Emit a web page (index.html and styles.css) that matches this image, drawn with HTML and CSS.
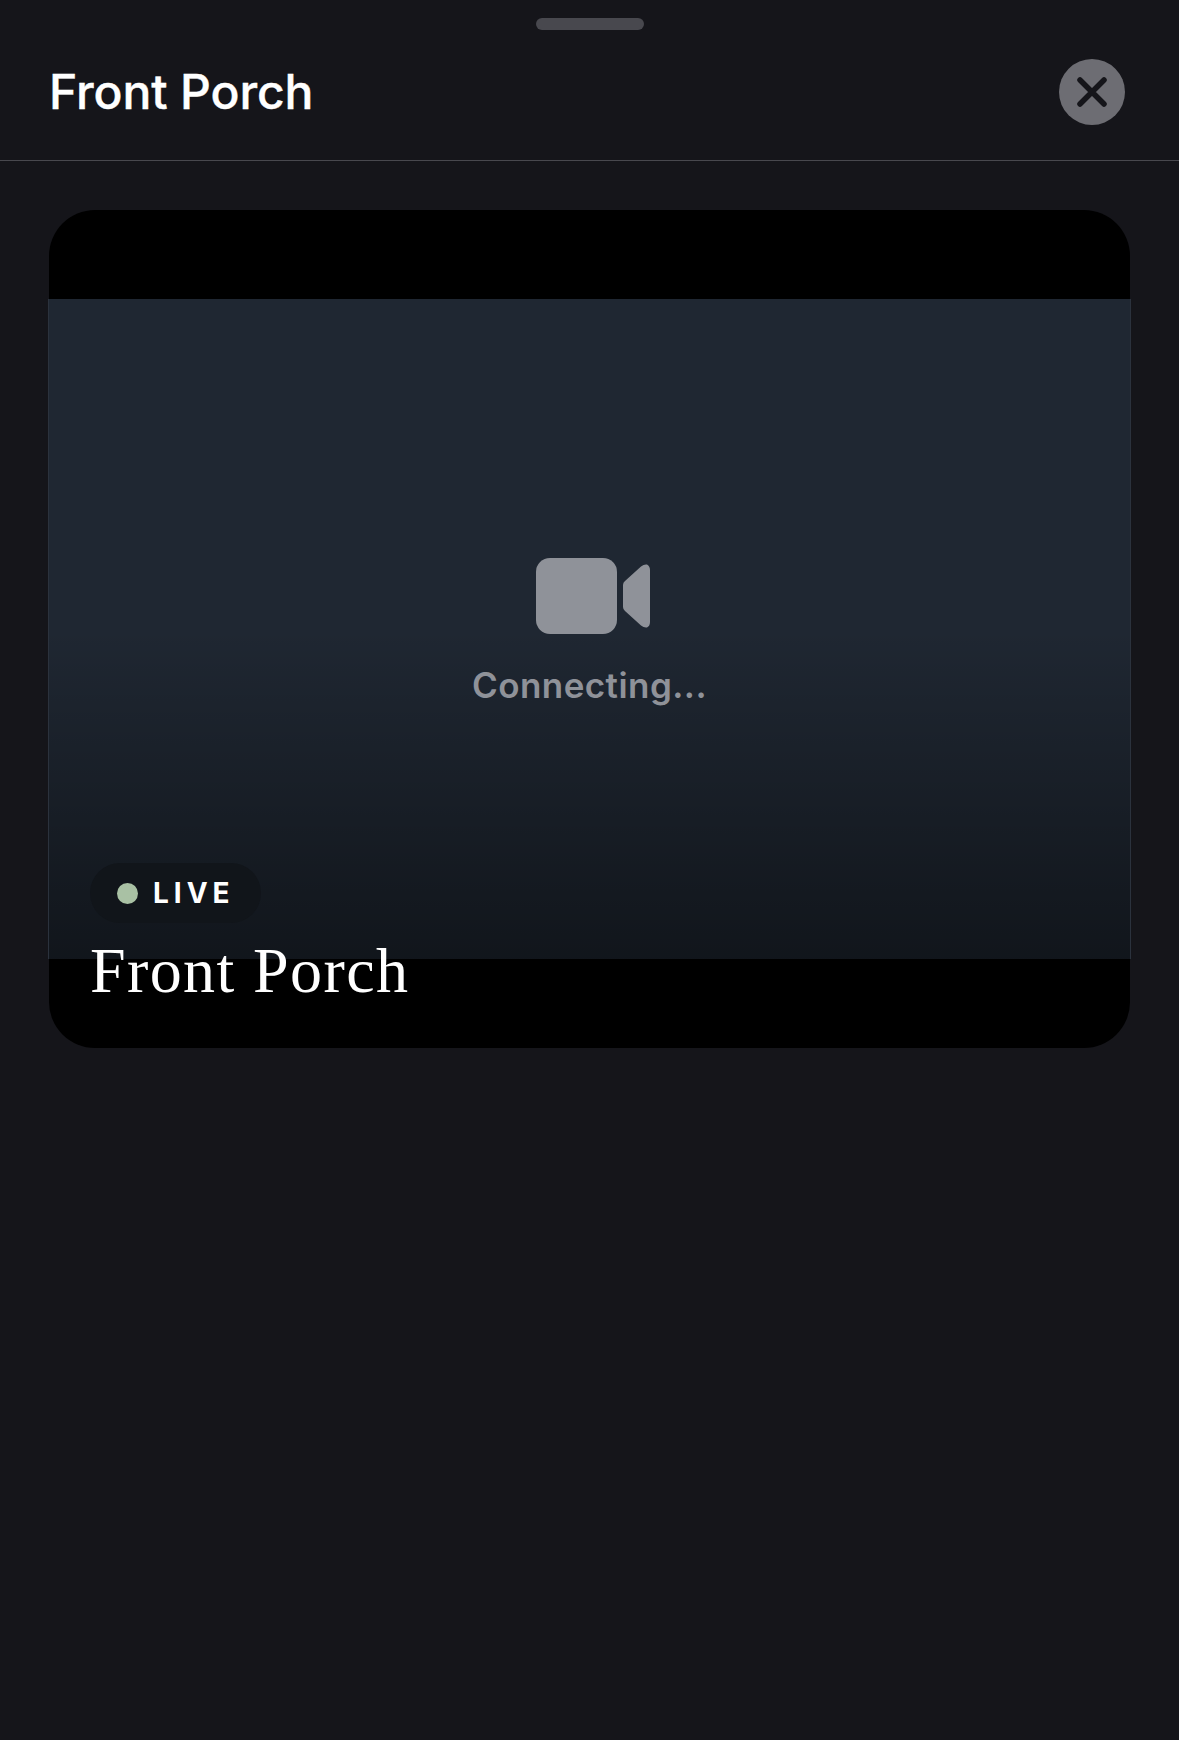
FILE: index.html
```
<!DOCTYPE html>
<html lang="en">
<head>
<meta charset="utf-8">
<title>Front Porch</title>
<link rel="stylesheet" href="styles.css">
</head>
<body>
<main class="sheet">
  <div class="grabber-row"><div class="grabber"></div></div>
  <header class="header">
    <h1 class="header-title">Front Porch</h1>
    <button class="close" aria-label="Close">
      <svg class="close-icon" viewBox="0 0 30 30"><path d="M3 3 L27 27 M27 3 L3 27"/></svg>
    </button>
  </header>
  <section class="content">
    <div class="card">
      <div class="video">
        <div class="scrim"></div>
        <div class="status">
          <svg class="camera" viewBox="0 0 114 76">
            <rect x="0" y="0" width="81" height="76" rx="14"/>
            <path d="M87 27 Q87 24.5 89 23 L105 8.5 Q108 6 111 6.500 Q114 8 114 12 L114 64 Q114 68 111 69.500 Q108 70 105 67.500 L89 53 Q87 51.500 87 49 Z"/>
          </svg>
          <div class="status-text">Connecting...</div>
        </div>
      </div>
      <div class="overlay">
        <div class="live"><span class="live-dot"></span><span class="live-text">LIVE</span></div>
        <div class="camera-name">Front Porch</div>
      </div>
    </div>
  </section>
</main>
</body>
</html>
```

FILE: styles.css
```
* { box-sizing: border-box; }
html, body { margin: 0; height: 100%; }
body { background: #15151a; color: #fff; font-family: Inter, "Liberation Sans", sans-serif; }
.sheet { width: 1179px; height: 1740px; overflow: hidden; }
.grabber-row { display: flex; justify-content: center; padding-top: 18px; }
.grabber { width: 108px; height: 12px; border-radius: 6px; background: #48484e; }
.header { display: flex; align-items: center; justify-content: space-between; height: 131px; padding: 0 54px 7px 49px; border-bottom: 1px solid #48484e; }
.header-title { margin: 0; font-size: 48px; font-weight: 500; line-height: 58px; letter-spacing: -0.1px; -webkit-text-stroke: 0.4px #fff; }
.close { display: flex; align-items: center; justify-content: center; width: 66px; height: 66px; padding: 0; border: 0; border-radius: 50%; background: #6d6d73; }
.close-icon { width: 30px; height: 30px; fill: none; stroke: #15151a; stroke-width: 5.5; stroke-linecap: round; }
.content { padding: 49px 49px 0; }
.card { position: relative; width: 1081px; height: 838px; padding: 89px 0; border-radius: 46px; background: #000; }
.video { position: relative; display: flex; align-items: center; justify-content: center; height: 660px; margin: 0 -1px; background: #1f2732; border: solid #2b323d; border-width: 0 1px; }
.status { position: relative; display: flex; flex-direction: column; align-items: center; gap: 30px; margin-top: 6px; }
.camera { display: block; width: 114px; height: 76px; margin-left: 8px; fill: #8f9299; }
.status-text { font-size: 35px; font-weight: 600; line-height: 42px; color: #8f9299; letter-spacing: 0.45px; }
.scrim { position: absolute; inset: 0; background: linear-gradient(to bottom, rgba(0,0,0,0) 50%, rgba(0,0,0,.45) 100%); }
.overlay { position: absolute; left: 41px; bottom: 41px; display: flex; flex-direction: column; align-items: flex-start; gap: 12px; }
.live { display: flex; align-items: center; gap: 15px; height: 60px; padding: 0 26px 0 27px; border-radius: 30px; background: #11151a; }
.live-dot { width: 21px; height: 21px; border-radius: 50%; background: #a9c1a4; }
.live-text { font-size: 28px; font-weight: 700; line-height: 34px; letter-spacing: 5px; }
.camera-name { font-family: "Liberation Serif", serif; font-size: 64px; line-height: 72px; letter-spacing: 1.4px; }
```
